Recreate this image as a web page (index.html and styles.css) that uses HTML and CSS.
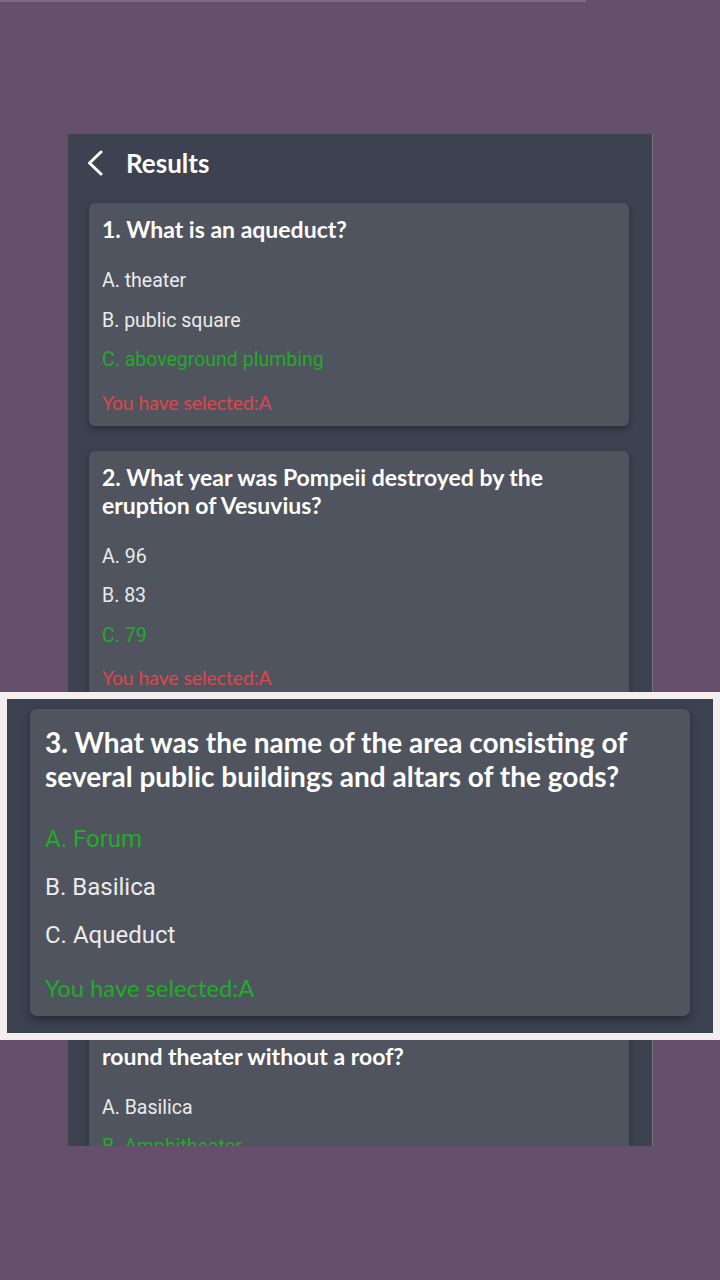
FILE: index.html
```html
<!DOCTYPE html>
<html lang="en">
<head>
<meta charset="utf-8">
<title>Results</title>
<link rel="stylesheet" href="styles.css">
</head>
<body>
<div class="top-line"></div>
<div class="phone">
  <header class="header">
    <svg class="back" width="18" height="26" viewBox="0 0 18 26"><path d="M15 2 L3.5 13 L15 24" fill="none" stroke="#ffffff" stroke-width="3" stroke-linecap="round" stroke-linejoin="round"/></svg>
    <h1 class="title">Results</h1>
  </header>
  <div class="list">
    <section class="card">
      <h2 class="q">1. What is an aqueduct?</h2>
      <ul class="opts">
        <li>A. theater</li>
        <li>B. public square</li>
        <li class="right">C. aboveground plumbing</li>
      </ul>
      <p class="sel wrong">You have selected:A</p>
    </section>
    <section class="card">
      <h2 class="q">2. What year was Pompeii destroyed by the eruption of Vesuvius?</h2>
      <ul class="opts">
        <li>A. 96</li>
        <li>B. 83</li>
        <li class="right">C. 79</li>
      </ul>
      <p class="sel wrong">You have selected:A</p>
    </section>
    <section class="card">
      <h2 class="q">3. What was the name of the area consisting of several public buildings and altars of the gods?</h2>
      <ul class="opts">
        <li class="right">A. Forum</li>
        <li>B. Basilica</li>
        <li>C. Aqueduct</li>
      </ul>
      <p class="sel ok">You have selected:A</p>
    </section>
    <section class="card">
      <h2 class="q">4. What was the name of the<br>round theater without a roof?</h2>
      <ul class="opts">
        <li>A. Basilica</li>
        <li class="right">B. Amphitheater</li>
        <li>C. Forum</li>
      </ul>
      <p class="sel ok">You have selected:B</p>
    </section>
  </div>
</div>

<div class="zoom-frame">
  <div class="zoom-inner">
    <section class="card big">
      <h2 class="q">3. What was the name of the area consisting of several public buildings and altars of the gods?</h2>
      <ul class="opts">
        <li class="right">A. Forum</li>
        <li>B. Basilica</li>
        <li>C. Aqueduct</li>
      </ul>
      <p class="sel ok">You have selected:A</p>
    </section>
  </div>
</div>
</body>
</html>
```
FILE: styles.css
```css
html, body {
  margin: 0;
  padding: 0;
}
body {
  background: #654f6b;
  width: 720px;
  height: 1280px;
  overflow: hidden;
  position: relative;
  font-family: Lato, "Noto Sans", sans-serif;
}
.top-line {
  width: 586px;
  height: 2px;
  background: #7d6a82;
}
.phone {
  margin: 132px 0 0 68px;
  width: 584px;
  height: 1012px;
  background: #3c4250;
  border-right: 1px solid #707684;
  overflow: hidden;
}
.header {
  height: 69px;
  display: flex;
  align-items: center;
  padding-left: 18px;
  padding-bottom: 12px;
  box-sizing: border-box;
}
.back {
  display: block;
  width: 18px;
  height: 26px;
}
.title {
  margin: 0 0 0 22px;
  font-size: 26px;
  font-weight: 700;
  color: #ffffff;
  line-height: 30px;
}
.list {
  display: flex;
  flex-direction: column;
  gap: 25px;
  padding: 0 23px 0 21px;
}
.card {
  background: #50545e;
  border-radius: 6px;
  padding: 12px 13px 10px;
  box-shadow: 0 3px 6px rgba(20, 22, 30, 0.45);
}
.q {
  margin: 0 0 18px;
  font-size: 23px;
  line-height: 28px;
  font-weight: 700;
  color: #ffffff;
}
.opts {
  list-style: none;
  margin: 0;
  padding: 0;
}
.opts li {
  font-family: Roboto, "Noto Sans", sans-serif;
  font-size: 19.5px;
  line-height: 39.5px;
  color: #ebebeb;
}
.opts li.right {
  color: #20ac29;
}
.sel {
  margin: 10px 0 0;
  font-size: 19.3px;
  line-height: 26px;
}
.sel.wrong { color: #e2444a; }
.sel.ok { color: #20ac29; }

.zoom-frame {
  position: absolute;
  left: 0;
  top: 692px;
  width: 720px;
  height: 348px;
  box-sizing: border-box;
  background: #f4eeee;
  padding: 7px;
}
.zoom-inner {
  background: #3c4250;
  height: 100%;
  box-sizing: border-box;
  padding: 10px 23px 0;
}
.card.big {
  padding: 16px 15px 12px;
  border-radius: 7px;
  box-shadow: 0 4px 8px rgba(20, 22, 30, 0.5);
}
.card.big .q {
  font-size: 28px;
  line-height: 34px;
  margin-bottom: 22px;
}
.card.big .opts li {
  font-size: 24px;
  line-height: 48px;
}
.card.big .sel {
  font-size: 23.8px;
  line-height: 32px;
  margin-top: 13px;
}
```
